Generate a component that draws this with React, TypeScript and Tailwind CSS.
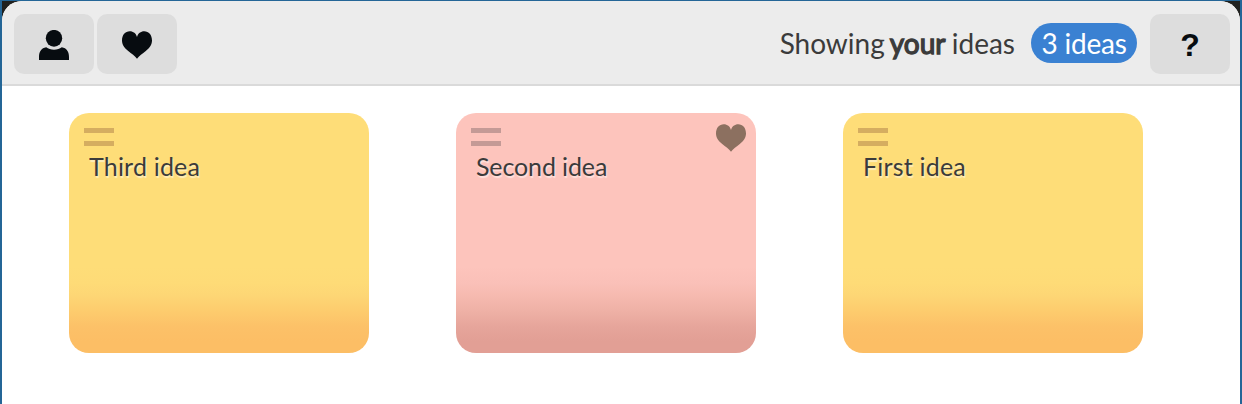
type IconProps = { className?: string };

function PersonIcon({ className }: IconProps) {
  return (
    <svg className={className} viewBox="0 0 30 30" fill="currentColor" aria-hidden="true">
      <ellipse cx="15" cy="8.3" rx="8.2" ry="8.4" />
      <path d="M0 30V27C0 21.6 2.4 18 7.2 17.2C9.3 18.7 11.9 19.7 15 19.7S20.700 18.700 22.800 17.200C27.600 18 30 21.600 30 27V30Z" />
    </svg>
  );
}

function HeartIcon({ className }: IconProps) {
  return (
    <svg className={className} viewBox="0 0 30 28" fill="currentColor" aria-hidden="true">
      <path d="M15 27.700C13 25 9.500 22.700 6.200 20C2.500 17 0 14 0 9.500C0 4 3.200 0.300 7.800 0.300C11.300 0.300 14 2.500 15 6C16 2.500 18.700 0.300 22.200 0.300C26.800 0.300 30 4 30 9.500C30 14 27.500 17 23.800 20C20.500 22.700 17 25 15 27.700Z" />
    </svg>
  );
}

const toolButton =
  "flex h-[60px] w-20 items-center justify-center rounded-[10px] bg-[#dddddd] text-[#070c10]";

type Idea = { title: string; liked?: boolean };

const ideas: Idea[] = [
  { title: "Third idea" },
  { title: "Second idea", liked: true },
  { title: "First idea" },
];

function IdeaCard({ title, liked }: Idea) {
  const tone = liked
    ? "tracking-[-0.12px] bg-[linear-gradient(to_bottom,#fdc4bc_64%,#fac0b8_71%,#f6bab0_76%,#eeb0a5_83%,#e6a59b_89%,#e29f95_95%)]"
    : "tracking-[0.2px] bg-[linear-gradient(to_bottom,#fedd78_64%,#fedb77_71%,#fdd675_76%,#fdcb6d_83%,#fcc168_89%,#fcbe65_95%)]";
  const bar = liked ? "bg-[#c49a96]" : "bg-[#d5ad60]";
  return (
    <article className={`h-60 w-[300px] rounded-[20px] ${tone}`}>
      <div className="flex h-[38px] items-start justify-between pr-2.5 pl-[15px]">
        <div className="mt-[15px] flex flex-col gap-2">
          <span className={`h-[5px] w-[30px] ${bar}`} />
          <span className={`h-[5px] w-[30px] ${bar}`} />
        </div>
        {liked && <HeartIcon className="mt-[11px] h-7 w-[30px] text-[#8c7060]" />}
      </div>
      <p className="pl-5 text-[25px] leading-[30px] text-[#3b3b3b] [text-shadow:1px_2px_1px_rgba(255,255,255,0.5)]">
        {title}
      </p>
    </article>
  );
}

export default function App() {
  return (
    <div className="h-[404px] w-[1242px] overflow-hidden border-x-2 border-t border-[#246697] bg-[#20211f] font-[Lato,sans-serif]">
      <div className="h-full overflow-hidden rounded-t-[20px] bg-white">
        <header className="flex h-[85px] items-start border-b-2 border-[#dadada] bg-[#ececec] pt-[13px] pr-2.5 pl-3">
          <div className="flex gap-[3px]">
            <button className={toolButton} aria-label="My ideas">
              <PersonIcon className="mt-0.5 h-[30px] w-[30px]" />
            </button>
            <button className={toolButton} aria-label="Favourites">
              <HeartIcon className="mt-0.5 h-7 w-[30px]" />
            </button>
          </div>
          <div className="ml-auto flex h-[60px] text-[28px] leading-[38px] text-[#3b3b3b]">
            <p className="mt-2.5 mr-4 flex whitespace-nowrap">
              <span className="mr-[5px]">Showing</span>{" "}
              <strong className="mr-[7px] w-[55px] font-normal [-webkit-text-stroke:1.300px_#3b3b3b]">
                your
              </strong>{" "}
              <span>ideas</span>
            </p>
            <span className="mt-[9px] mr-[13px] flex h-10 w-[106px] items-center justify-center rounded-full bg-[#3a81d2] tracking-[-0.2px] whitespace-nowrap text-white">
              3 ideas
            </span>
            <button
              className={`${toolButton} pt-0.5 font-['Liberation_Sans',sans-serif] text-[32px] font-bold`}
              aria-label="Help"
            >
              ?
            </button>
          </div>
        </header>
        <main className="flex gap-[87px] pt-[27px] pl-[67px]">
          {ideas.map((idea) => (
            <IdeaCard key={idea.title} {...idea} />
          ))}
        </main>
      </div>
    </div>
  );
}
